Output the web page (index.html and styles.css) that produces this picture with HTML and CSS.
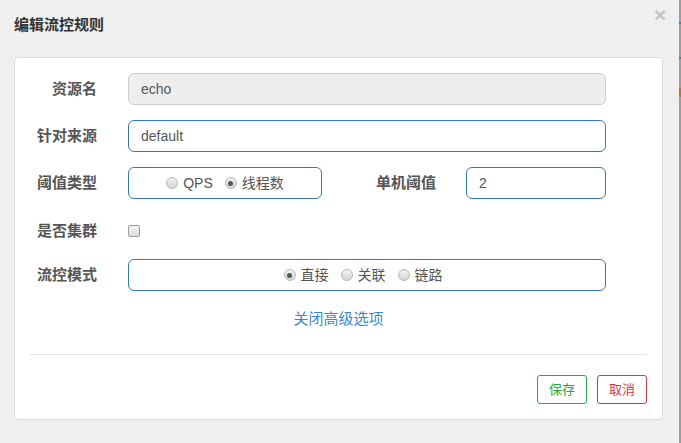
FILE: index.html
```html
<!DOCTYPE html>
<html lang="zh">
<head>
<meta charset="utf-8">
<title>编辑流控规则</title>
<link rel="stylesheet" href="styles.css">
</head>
<body>
<div class="screen">
  <div class="modal">
    <div class="modal-header">
      <h4 class="title">编辑流控规则</h4>
      <span class="close">×</span>
    </div>
    <div class="card">
      <div class="form">
        <div class="row">
          <span class="lbl">资源名</span>
          <div class="field disabled">echo</div>
        </div>
        <div class="row">
          <span class="lbl">针对来源</span>
          <div class="field">default</div>
        </div>
        <div class="row row-split">
          <span class="lbl">阈值类型</span>
          <div class="field radios">
            <span class="opt"><span class="radio"></span>QPS</span>
            <span class="opt"><span class="radio checked"></span>线程数</span>
          </div>
          <span class="lbl">单机阈值</span>
          <div class="field">2</div>
        </div>
        <div class="row row-check">
          <span class="lbl">是否集群</span>
          <span class="checkbox"></span>
        </div>
        <div class="row">
          <span class="lbl">流控模式</span>
          <div class="field radios radios-wide">
            <span class="opt"><span class="radio checked"></span>直接</span>
            <span class="opt"><span class="radio"></span>关联</span>
            <span class="opt"><span class="radio"></span>链路</span>
          </div>
        </div>
        <div class="toggle"><a class="link">关闭高级选项</a></div>
      </div>
      <div class="divider"></div>
      <div class="footer">
        <span class="btn btn-save">保存</span>
        <span class="btn btn-cancel">取消</span>
      </div>
    </div>
  </div>
  <div class="scrollbar">
    <span class="mark mark-blue1"></span>
    <span class="mark mark-blue2"></span>
    <span class="mark mark-orange"></span>
  </div>
</div>
</body>
</html>
```

FILE: styles.css
```css
* { box-sizing: border-box; }
html, body { margin: 0; padding: 0; }
body {
  background: #efefef;
  font-family: "Liberation Sans", "Noto Sans CJK SC", sans-serif;
  color: #555;
  width: 681px;
  height: 443px;
  overflow: hidden;
}
.screen {
  display: flex;
  width: 681px;
  height: 443px;
}
.modal {
  flex: 1;
  position: relative;
}
.modal-header {
  padding: 15px 0 0 14px;
  height: 57px;
}
.title {
  margin: 0;
  font-size: 15px;
  line-height: 20px;
  font-weight: bold;
  color: #333;
}
.close {
  position: absolute;
  top: 4px;
  left: 654px;
  font-size: 21px;
  line-height: 21px;
  font-weight: bold;
  color: #c4c4c4;
}
.card {
  margin-left: 14px;
  width: 649px;
  height: 363px;
  background: #fff;
  border: 1px solid #dcdcdc;
  border-radius: 4px;
  padding: 15px;
}
.form {
  display: flex;
  flex-direction: column;
  gap: 15px;
}
.row {
  display: grid;
  grid-template-columns: 98px 478px;
  align-items: center;
  height: 32px;
}
.row-split {
  grid-template-columns: 98px 194px 144px 140px;
}
.row-check {
  height: 30px;
  padding-top: 3px;
}
.lbl {
  font-size: 15px;
  font-weight: bold;
  color: #555;
  text-align: right;
  padding-right: 31px;
  line-height: 20px;
}
.row-split .lbl:nth-of-type(2) { padding-right: 30px; }
.field {
  height: 32px;
  border: 1px solid #337ab7;
  border-radius: 6px;
  padding: 0 12px;
  font-size: 14px;
  line-height: 30px;
  color: #555;
  background: #fff;
}
.field.disabled {
  background: #eee;
  border-color: #ccc;
}
.radios {
  display: flex;
  justify-content: center;
  align-items: center;
  gap: 12px;
}
.radios-wide {
  padding-right: 20px;
}
.opt {
  display: inline-flex;
  align-items: center;
  gap: 5px;
  font-size: 14px;
  color: #555;
}
.radio {
  width: 12px;
  height: 12px;
  border-radius: 50%;
  border: 1px solid #b8b8b8;
  background: linear-gradient(#f2f2f2, #d4d4d4);
  display: inline-flex;
  align-items: center;
  justify-content: center;
}
.radio.checked::after {
  content: "";
  width: 5px;
  height: 5px;
  border-radius: 50%;
  background: #555;
}
.checkbox {
  width: 12px;
  height: 12px;
  border: 1px solid #9c9c9c;
  border-radius: 2px;
  background: linear-gradient(#f6f6f6, #dcdcdc);
}
.toggle {
  text-align: center;
  margin-top: 3px;
  margin-left: -15px;
  margin-right: -15px;
  line-height: 20px;
}
.link {
  font-size: 15px;
  color: #3a87c8;
}
.divider {
  height: 1px;
  background: #e5e5e5;
  margin-top: 25px;
}
.footer {
  display: flex;
  justify-content: flex-end;
  gap: 10px;
  padding-top: 20px;
}
.btn {
  width: 50px;
  height: 29px;
  border: 1px solid;
  border-radius: 3px;
  font-size: 13px;
  line-height: 27px;
  text-align: center;
  background: #fff;
}
.btn-save { border-color: #28a745; color: #28a745; }
.btn-cancel { border-color: #dc3545; color: #dc3545; }
.scrollbar {
  width: 2px;
  height: 443px;
  background: #9d9d9d;
  position: relative;
}
.mark {
  position: absolute;
  left: 0;
  width: 2px;
}
.mark-blue1 { top: 22px; height: 2px; background: #4a7ab0; }
.mark-blue2 { top: 57px; height: 2px; background: #4a7ab0; }
.mark-orange { top: 88px; height: 9px; background: #b07a3a; }
```
